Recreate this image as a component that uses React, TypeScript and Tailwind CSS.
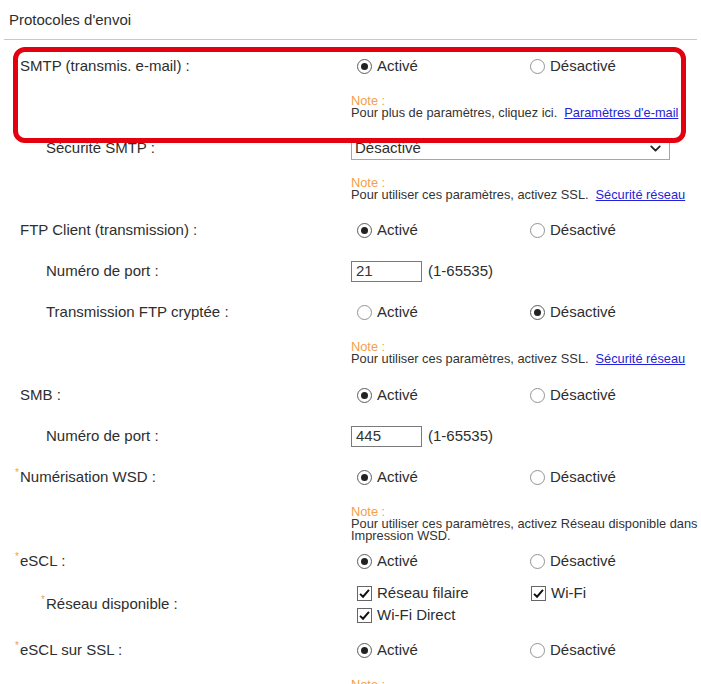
import type { ReactNode } from 'react';
import { ChevronDown } from 'lucide-react';

function Label({ text, star }: { text: string; star?: boolean }) {
  return (
    <span className="relative whitespace-nowrap">
      {star && <span className="absolute -left-[5px] -top-[1px] text-[10px] text-[#f5a04a]">*</span>}
      {text}
    </span>
  );
}

function Radio({ checked, label }: { checked: boolean; label: string }) {
  return (
    <div className="flex w-[173px] items-center gap-[5px]">
      <span className={`flex h-[15px] w-[15px] items-center justify-center rounded-full border bg-white ${checked ? 'border-[#5c5c5c]' : 'border-[#939393]'}`}>
        {checked && <span className="h-[7px] w-[7px] rounded-full bg-[#222]" />}
      </span>
      <span>{label}</span>
    </div>
  );
}

function RadioPair({ on }: { on: boolean }) {
  return (
    <div className="flex pl-[6px]">
      <Radio checked={on} label="Activé" />
      <Radio checked={!on} label="Désactivé" />
    </div>
  );
}

function Check({ label }: { label: string }) {
  return (
    <div className="flex w-[174px] items-center gap-[5px]">
      <span className="flex h-[15px] w-[15px] items-center justify-center border border-[#666] bg-white">
        <svg viewBox="0 0 16 16" className="h-[13px] w-[13px]">
          <path d="M2.5 8.5 L6.2 12 L13.5 3.5" fill="none" stroke="#111" strokeWidth="2.4" />
        </svg>
      </span>
      <span>{label}</span>
    </div>
  );
}

function Note({ children, className = 'pt-[8px] pb-[9px]' }: { children: ReactNode; className?: string }) {
  return (
    <div className={`whitespace-nowrap text-[12.8px] leading-[12px] text-[#333] ${className}`}>
      <div className="text-[#f5a04a]">Note :</div>
      {children}
    </div>
  );
}

function Link({ children }: { children: ReactNode }) {
  return <a className="ml-[7px] cursor-pointer text-[#2424d6] underline">{children}</a>;
}

function Row({ label, sub, star, children, note }: { label: string; sub?: boolean; star?: boolean; children: ReactNode; note?: ReactNode }) {
  return (
    <div className="flex">
      <div className={`flex h-[41px] w-[351px] shrink-0 items-center ${sub ? 'pl-[46px]' : 'pl-[20px]'}`}>
        <Label text={label} star={star} />
      </div>
      <div className="min-w-0 flex-1">
        <div className="flex h-[41px] items-center">{children}</div>
        {note}
      </div>
    </div>
  );
}

function PortField({ value }: { value: string }) {
  return (
    <div className="flex items-center">
      <input readOnly value={value} className="h-[21px] w-[71px] border border-[#7a7a7a] bg-white pl-[4px] text-[15px] text-[#333] outline-none" />
      <span className="ml-[6px]">(1-65535)</span>
    </div>
  );
}

function SslNote({ className }: { className?: string }) {
  return (
    <Note className={className}>
      <div>
        Pour utiliser ces paramètres, activez SSL.<Link>Sécurité réseau</Link>
      </div>
    </Note>
  );
}

export default function App() {
  return (
    <div className="relative h-[684px] w-[701px] overflow-hidden bg-white font-['Liberation_Sans',Arial,sans-serif] text-[15px] text-[#2e2e2e]">
      <div className="mx-[4px] flex h-[40px] items-center border-b border-[#c8c8c8] pl-[5px] pt-[2px]">Protocoles d'envoi</div>

      <div className="mt-[6px]">
        <Row
          label="SMTP (transmis. e-mail) :"
          note={
            <Note>
              <div>
                Pour plus de paramètres, cliquez ici.<Link>Paramètres d'e-mail</Link>
              </div>
            </Note>
          }
        >
          <RadioPair on />
        </Row>

        <Row label="Sécurité SMTP :" sub note={<SslNote />}>
          <div className="flex h-[22px] w-[319px] items-center justify-between border border-[#a6a6a6] bg-white pl-[3px] pr-[5px]">
            <span>Désactivé</span>
            <ChevronDown size={17} strokeWidth={2.6} className="text-[#222]" />
          </div>
        </Row>

        <Row label="FTP Client (transmission) :">
          <RadioPair on />
        </Row>
        <Row label="Numéro de port :" sub>
          <PortField value="21" />
        </Row>
        <Row label="Transmission FTP cryptée :" sub note={<SslNote className="pt-[8px] pb-[10px]" />}>
          <RadioPair on={false} />
        </Row>

        <Row label="SMB :">
          <RadioPair on />
        </Row>
        <Row label="Numéro de port :" sub>
          <PortField value="445" />
        </Row>

        <Row
          label="Numérisation WSD :"
          star
          note={
            <Note className="pt-[8px] pb-[0px]">
              <div>Pour utiliser ces paramètres, activez Réseau disponible dans</div>
              <div>Impression WSD.</div>
            </Note>
          }
        >
          <RadioPair on />
        </Row>

        <div className="flex">
          <div className="flex h-[39px] w-[351px] shrink-0 items-center pl-[20px]">
            <Label text="eSCL :" star />
          </div>
          <div className="flex h-[39px] flex-1 items-center">
            <RadioPair on />
          </div>
        </div>

        <div className="flex pb-[4px] pt-[1px]">
          <div className="flex w-[351px] shrink-0 items-center pl-[46px]">
            <Label text="Réseau disponible :" star />
          </div>
          <div className="flex-1 pl-[6px]">
            <div className="flex h-[22px] items-center">
              <Check label="Réseau filaire" />
              <Check label="Wi-Fi" />
            </div>
            <div className="flex h-[22px] items-center">
              <Check label="Wi-Fi Direct" />
            </div>
          </div>
        </div>

        <Row
          label="eSCL sur SSL :"
          star
          note={
            <Note>
              <div>Pour utiliser ces paramètres, activez SSL.</div>
            </Note>
          }
        >
          <RadioPair on />
        </Row>
      </div>

      <div className="pointer-events-none absolute left-[13px] top-[47px] h-[96px] w-[673px] rounded-[12px] border-[5px] border-[#e3000f]" />
    </div>
  );
}
